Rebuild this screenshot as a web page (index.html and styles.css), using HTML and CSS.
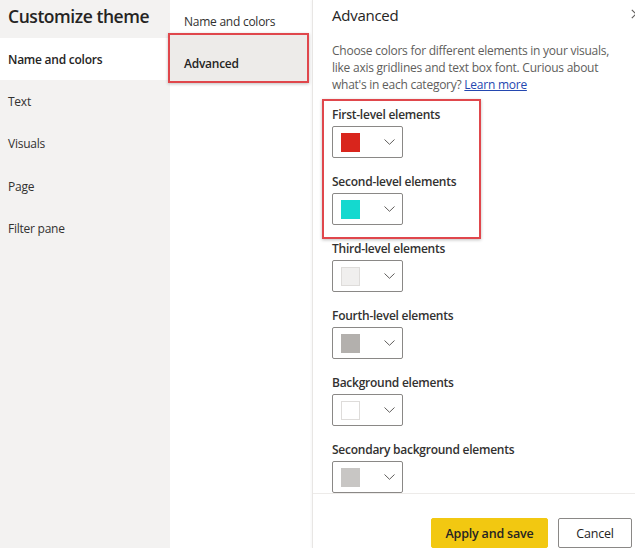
FILE: index.html
```html
<!DOCTYPE html>
<html lang="en">
<head>
<meta charset="utf-8">
<title>Customize theme</title>
<link rel="stylesheet" href="styles.css">
</head>
<body>
<div class="dialog">
  <nav class="nav">
    <h1 class="nav-title">Customize theme</h1>
    <ul class="nav-list">
      <li class="nav-item is-active">Name and colors</li>
      <li class="nav-item">Text</li>
      <li class="nav-item">Visuals</li>
      <li class="nav-item">Page</li>
      <li class="nav-item">Filter pane</li>
    </ul>
  </nav>

  <div class="subnav">
    <div class="subnav-item subnav-first">Name and colors</div>
    <div class="subnav-item is-active">Advanced</div>
  </div>

  <section class="panel">
    <header class="panel-header">
      <h2 class="panel-title">Advanced</h2>
      <svg class="close" width="6" height="10" viewBox="0 0 6 10"><path d="M0.8 0.8 L5 5 L0.8 9.2" fill="none" stroke="#605e5c" stroke-width="1.2"/></svg>
    </header>

    <div class="panel-body">
      <p class="desc">Choose colors for different elements in your visuals, like axis gridlines and text box font. Curious about what's in each category? <a class="link" href="#">Learn more</a></p>

      <div class="highlight">
        <div class="field">
          <div class="field-label">First-level elements</div>
          <div class="picker">
            <span class="swatch swatch-first"></span>
            <svg class="chev" width="11" height="6" viewBox="0 0 11 6"><path d="M0.5 0.5 L5.5 5.3 L10.5 0.5" fill="none" stroke="#605e5c" stroke-width="1"/></svg>
          </div>
        </div>
        <div class="field">
          <div class="field-label">Second-level elements</div>
          <div class="picker">
            <span class="swatch swatch-second"></span>
            <svg class="chev" width="11" height="6" viewBox="0 0 11 6"><path d="M0.5 0.5 L5.5 5.3 L10.5 0.5" fill="none" stroke="#605e5c" stroke-width="1"/></svg>
          </div>
        </div>
      </div>

      <div class="field">
        <div class="field-label">Third-level elements</div>
        <div class="picker">
          <span class="swatch swatch-third"></span>
          <svg class="chev" width="11" height="6" viewBox="0 0 11 6"><path d="M0.5 0.5 L5.5 5.3 L10.5 0.5" fill="none" stroke="#605e5c" stroke-width="1"/></svg>
        </div>
      </div>
      <div class="field">
        <div class="field-label">Fourth-level elements</div>
        <div class="picker">
          <span class="swatch swatch-fourth"></span>
          <svg class="chev" width="11" height="6" viewBox="0 0 11 6"><path d="M0.5 0.5 L5.5 5.3 L10.5 0.5" fill="none" stroke="#605e5c" stroke-width="1"/></svg>
        </div>
      </div>
      <div class="field">
        <div class="field-label">Background elements</div>
        <div class="picker">
          <span class="swatch swatch-bg"></span>
          <svg class="chev" width="11" height="6" viewBox="0 0 11 6"><path d="M0.5 0.5 L5.5 5.3 L10.5 0.5" fill="none" stroke="#605e5c" stroke-width="1"/></svg>
        </div>
      </div>
      <div class="field">
        <div class="field-label">Secondary background elements</div>
        <div class="picker">
          <span class="swatch swatch-bg2"></span>
          <svg class="chev" width="11" height="6" viewBox="0 0 11 6"><path d="M0.5 0.5 L5.5 5.3 L10.5 0.5" fill="none" stroke="#605e5c" stroke-width="1"/></svg>
        </div>
      </div>
    </div>

    <footer class="panel-footer">
      <button class="btn btn-primary">Apply and save</button>
      <button class="btn btn-default">Cancel</button>
    </footer>
  </section>
</div>
</body>
</html>
```

FILE: styles.css
```css
* { box-sizing: border-box; }

html, body {
  margin: 0;
  padding: 0;
  background: #ffffff;
}

body {
  font-family: "Open Sans", "Noto Sans", sans-serif;
  color: #252423;
  font-size: 12px;
  letter-spacing: -0.25px;
}

.dialog {
  display: flex;
  width: 635px;
  height: 548px;
  overflow: hidden;
}

/* left navigation */
.nav {
  width: 170px;
  flex: none;
  background: #f3f2f1;
}

.nav-title {
  margin: 0;
  height: 38px;
  padding: 3px 0 0 8px;
  font-size: 17.5px;
  font-weight: 600;
  line-height: 26px;
  color: #252423;
  letter-spacing: -0.45px;
}

.nav-list {
  list-style: none;
  margin: 0;
  padding: 0;
}

.nav-item {
  height: 42.3px;
  display: flex;
  align-items: center;
  padding-left: 8px;
  font-size: 12px;
  color: #323130;
}

.nav-item.is-active {
  background: #ffffff;
  font-weight: 600;
  color: #252423;
}

/* second-level navigation */
.subnav {
  width: 142px;
  flex: none;
  background: #ffffff;
}

.subnav-item {
  padding-left: 14px;
  font-size: 12px;
  color: #323130;
}

.subnav-first {
  height: 33px;
  display: flex;
  align-items: flex-end;
  padding-bottom: 3px;
}

.subnav-item.is-active {
  height: 50px;
  margin-left: -2px;
  margin-right: 3px;
  padding: 20px 0 0 14px;
  background: #edebe9;
  border: 2px solid #e0474c;
  box-shadow: 0 1px 3px rgba(0, 0, 0, 0.25);
  font-weight: 600;
  color: #252423;
}

/* content panel */
.panel {
  flex: 1;
  display: flex;
  flex-direction: column;
  border-left: 1px solid #e8e6e4;
  box-shadow: -1px 0 2px rgba(0, 0, 0, 0.04);
  min-width: 0;
}

.panel-header {
  display: flex;
  justify-content: space-between;
  align-items: center;
  height: 30px;
  padding: 0 0 0 19px;
}

.panel-title {
  margin: 0;
  font-size: 15px;
  font-weight: 400;
  color: #252423;
}

.close {
  margin-right: -2px;
  margin-top: -2px;
}

.panel-body {
  flex: 1;
  padding: 11.5px 0 0 19px;
  overflow: hidden;
}

.desc {
  margin: 0;
  width: 292px;
  font-size: 12px;
  line-height: 17px;
  color: #605e5c;
}

.link {
  color: #2447b0;
  text-decoration: underline;
}

.highlight {
  width: 159px;
  margin: 6.5px 0 0.5px -10px;
  padding: 4.5px 8px 0 8px;
  border: 2px solid #e0474c;
  box-shadow: 0 1px 3px rgba(0, 0, 0, 0.25);
}

.highlight .field:last-child {
  margin-bottom: 12px;
}

.field {
  margin-bottom: 14.5px;
}

.field-label {
  font-size: 12px;
  line-height: 17px;
  font-weight: 600;
  color: #323130;
}

.picker {
  margin-top: 3.5px;
  width: 71px;
  height: 32px;
  border: 1px solid #8a8886;
  border-radius: 2px;
  display: flex;
  align-items: center;
  justify-content: space-between;
  padding: 0 7px 0 8px;
  background: #ffffff;
}

.swatch {
  width: 19px;
  height: 19px;
  display: block;
}

.swatch-first  { background: #d9251c; }
.swatch-second { background: #14d9cf; }
.swatch-third  { background: #f0efee; border: 1px solid #dedcda; }
.swatch-fourth { background: #b3b0ad; }
.swatch-bg     { background: #ffffff; border: 1px solid #dedcda; }
.swatch-bg2    { background: #c8c6c4; }

/* footer */
.panel-footer {
  height: 55px;
  flex: none;
  border-top: 1px solid #edebe9;
  display: flex;
  justify-content: flex-end;
  align-items: flex-start;
  gap: 10px;
  padding: 24px 3px 0 0;
}

.btn {
  height: 30px;
  font-family: inherit;
  font-size: 12.5px;
  font-weight: 600;
  letter-spacing: -0.2px;
  border-radius: 2px;
  padding: 0;
  color: #252423;
}

.btn-primary {
  width: 117px;
  background: #f2c811;
  border: 1px solid #f2c811;
}

.btn-default {
  width: 74px;
  background: #ffffff;
  border: 1px solid #8a8886;
  font-weight: 400;
}
```
